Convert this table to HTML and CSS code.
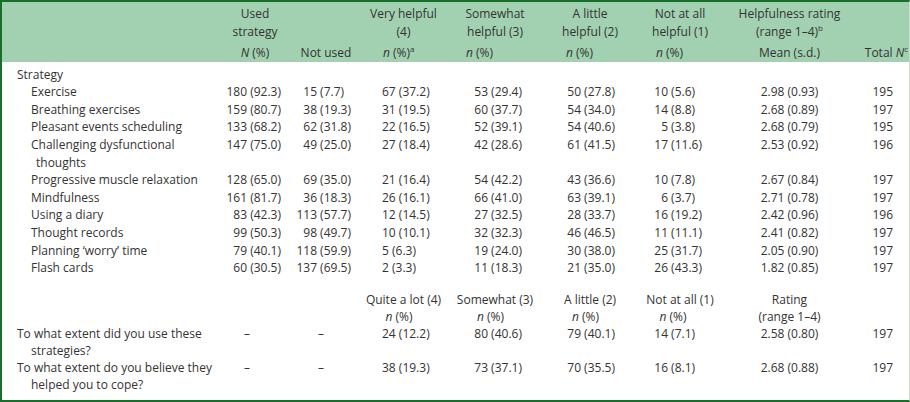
FILE: index.html
```html
<!DOCTYPE html>
<html lang="en">
<head>
<meta charset="utf-8">
<title>Strategy helpfulness</title>
<link rel="stylesheet" href="styles.css">
</head>
<body>
<div class="frame">
<table class="tbl">
<colgroup>
<col class="w0"><col class="w1"><col class="w2"><col class="w3"><col class="w4"><col class="w5"><col class="w6"><col class="w7"><col class="w8">
</colgroup>
<thead>
<tr class="h1">
<th></th>
<th class="ctr">Used<br>strategy</th>
<th></th>
<th class="ctr">Very helpful<br>(4)</th>
<th class="ctr">Somewhat<br>helpful (3)</th>
<th class="ctr">A little<br>helpful (2)</th>
<th class="ctr">Not at all<br>helpful (1)</th>
<th class="ctr rate">Helpfulness rating<br>(range 1–4)<sup>b</sup></th>
<th></th>
</tr>
<tr class="h2">
<th></th>
<th class="ctr"><i>N</i> (%)</th>
<th class="ctr">Not used</th>
<th class="num"><i>n</i> (%)<sup>a</sup></th>
<th class="num"><i>n</i> (%)</th>
<th class="num"><i>n</i> (%)</th>
<th class="num"><i>n</i> (%)</th>
<th class="ctr rate">Mean (s.d.)</th>
<th class="tot">Total <i>N</i><sup>c</sup></th>
</tr>
</thead>
<tbody>
<tr class="first"><td class="lbl top" colspan="9">Strategy</td></tr>
<tr><td class="lbl sub">Exercise</td><td class="u">180 (92.3)</td><td class="num"><span class="c">15</span> (7.7)</td><td class="num"><span class="c">67</span> (37.2)</td><td class="num"><span class="c">53</span> (29.4)</td><td class="num"><span class="c">50</span> (27.8)</td><td class="num"><span class="c">10</span> (5.6)</td><td class="ctr rate">2.98 (0.93)</td><td class="tot">195</td></tr>
<tr><td class="lbl sub">Breathing exercises</td><td class="u">159 (80.7)</td><td class="num"><span class="c">38</span> (19.3)</td><td class="num"><span class="c">31</span> (19.5)</td><td class="num"><span class="c">60</span> (37.7)</td><td class="num"><span class="c">54</span> (34.0)</td><td class="num"><span class="c">14</span> (8.8)</td><td class="ctr rate">2.68 (0.89)</td><td class="tot">197</td></tr>
<tr><td class="lbl sub">Pleasant events scheduling</td><td class="u">133 (68.2)</td><td class="num"><span class="c">62</span> (31.8)</td><td class="num"><span class="c">22</span> (16.5)</td><td class="num"><span class="c">52</span> (39.1)</td><td class="num"><span class="c">54</span> (40.6)</td><td class="num"><span class="c">5</span> (3.8)</td><td class="ctr rate">2.68 (0.79)</td><td class="tot">195</td></tr>
<tr><td class="lbl sub">Challenging dysfunctional<br><span class="hang">thoughts</span></td><td class="u">147 (75.0)</td><td class="num"><span class="c">49</span> (25.0)</td><td class="num"><span class="c">27</span> (18.4)</td><td class="num"><span class="c">42</span> (28.6)</td><td class="num"><span class="c">61</span> (41.5)</td><td class="num"><span class="c">17</span> (11.6)</td><td class="ctr rate">2.53 (0.92)</td><td class="tot">196</td></tr>
<tr><td class="lbl sub">Progressive muscle relaxation</td><td class="u">128 (65.0)</td><td class="num"><span class="c">69</span> (35.0)</td><td class="num"><span class="c">21</span> (16.4)</td><td class="num"><span class="c">54</span> (42.2)</td><td class="num"><span class="c">43</span> (36.6)</td><td class="num"><span class="c">10</span> (7.8)</td><td class="ctr rate">2.67 (0.84)</td><td class="tot">197</td></tr>
<tr><td class="lbl sub">Mindfulness</td><td class="u">161 (81.7)</td><td class="num"><span class="c">36</span> (18.3)</td><td class="num"><span class="c">26</span> (16.1)</td><td class="num"><span class="c">66</span> (41.0)</td><td class="num"><span class="c">63</span> (39.1)</td><td class="num"><span class="c">6</span> (3.7)</td><td class="ctr rate">2.71 (0.78)</td><td class="tot">197</td></tr>
<tr><td class="lbl sub">Using a diary</td><td class="u">83 (42.3)</td><td class="num"><span class="c">113</span> (57.7)</td><td class="num"><span class="c">12</span> (14.5)</td><td class="num"><span class="c">27</span> (32.5)</td><td class="num"><span class="c">28</span> (33.7)</td><td class="num"><span class="c">16</span> (19.2)</td><td class="ctr rate">2.42 (0.96)</td><td class="tot">196</td></tr>
<tr><td class="lbl sub">Thought records</td><td class="u">99 (50.3)</td><td class="num"><span class="c">98</span> (49.7)</td><td class="num"><span class="c">10</span> (10.1)</td><td class="num"><span class="c">32</span> (32.3)</td><td class="num"><span class="c">46</span> (46.5)</td><td class="num"><span class="c">11</span> (11.1)</td><td class="ctr rate">2.41 (0.82)</td><td class="tot">197</td></tr>
<tr><td class="lbl sub">Planning ‘worry’ time</td><td class="u">79 (40.1)</td><td class="num"><span class="c">118</span> (59.9)</td><td class="num"><span class="c">5</span> (6.3)</td><td class="num"><span class="c">19</span> (24.0)</td><td class="num"><span class="c">30</span> (38.0)</td><td class="num"><span class="c">25</span> (31.7)</td><td class="ctr rate">2.05 (0.90)</td><td class="tot">197</td></tr>
<tr><td class="lbl sub">Flash cards</td><td class="u">60 (30.5)</td><td class="num"><span class="c">137</span> (69.5)</td><td class="num"><span class="c">2</span> (3.3)</td><td class="num"><span class="c">11</span> (18.3)</td><td class="num"><span class="c">21</span> (35.0)</td><td class="num"><span class="c">26</span> (43.3)</td><td class="ctr rate">1.82 (0.85)</td><td class="tot">197</td></tr>
<tr class="q sub-head">
<td></td><td></td><td></td>
<td class="ctr">Quite a lot (4)<br><span class="np"><i>n</i> (%)</span></td>
<td class="ctr">Somewhat (3)<br><span class="np"><i>n</i> (%)</span></td>
<td class="ctr">A little (2)<br><span class="np"><i>n</i> (%)</span></td>
<td class="ctr">Not at all (1)<br><span class="np np6"><i>n</i> (%)</span></td>
<td class="ctr rate">Rating<br>(range 1–4)</td>
<td></td>
</tr>
<tr class="q"><td class="lbl top">To what extent did you use these<br><span class="hang2">strategies?</span></td><td class="dash">–</td><td class="dash2">–</td><td class="num"><span class="c">24</span> (12.2)</td><td class="num"><span class="c">80</span> (40.6)</td><td class="num"><span class="c">79</span> (40.1)</td><td class="num"><span class="c">14</span> (7.1)</td><td class="ctr rate">2.58 (0.80)</td><td class="tot">197</td></tr>
<tr class="q"><td class="lbl top">To what extent do you believe they<br><span class="hang2">helped you to cope?</span></td><td class="dash">–</td><td class="dash2">–</td><td class="num"><span class="c">38</span> (19.3)</td><td class="num"><span class="c">73</span> (37.1)</td><td class="num"><span class="c">70</span> (35.5)</td><td class="num"><span class="c">16</span> (8.1)</td><td class="ctr rate">2.68 (0.88)</td><td class="tot">197</td></tr>
</tbody>
</table>
</div>
</body>
</html>
```
FILE: styles.css
```css
html, body {
  margin: 0;
  padding: 0;
  background: #ffffff;
}
.frame {
  width: 910px;
  height: 402px;
  box-sizing: border-box;
  border-top: 2px solid #16702a;
  border-left: 2px solid #16702a;
  border-bottom: 2px solid #16702a;
  border-right: 1px solid #c9dccf;
  overflow: hidden;
}
.tbl {
  border-collapse: collapse;
  table-layout: fixed;
  width: 907px;
  font-family: "Open Sans", "DejaVu Sans", sans-serif;
  font-weight: 400;
  font-size: 12px;
  line-height: 17.6px;
  color: #333333;
}
.w0 { width: 218px; }
.w1 { width: 70px; }
.w2 { width: 72px; }
.w3 { width: 83px; }
.w4 { width: 100px; }
.w5 { width: 90px; }
.w6 { width: 90px; }
.w7 { width: 135px; }
.w8 { width: 49px; }
th, td {
  padding: 0;
  font-weight: 400;
  white-space: nowrap;
  vertical-align: top;
}
thead { background: #a2d1b1; }
.h1 th { padding-top: 3px; line-height: 17.5px; }
.h2 th { padding-top: 4px; padding-bottom: 0; }
sup { font-size: 8px; line-height: 0; vertical-align: 5px; }
.ctr { text-align: center; }
.rate { padding-right: 6px; }
.num { text-align: left; }
.h2 .num { padding-left: 21px; }
.tot { text-align: right; padding-right: 16px; }
.h2 .tot { padding-right: 1px; }
.u { text-align: right; padding-right: 9px; }
.c { display: inline-block; text-align: right; }
td:nth-child(3) .c { width: 27px; }
td:nth-child(4) .c { width: auto; margin-left: 20px; }
td:nth-child(5) .c { width: 14px; margin-left: 29px; }
td:nth-child(6) .c { width: 14px; margin-left: 22px; }
td:nth-child(7) .c { width: 14px; margin-left: 19px; }
.first td { padding-top: 4px; }
.lbl.top { padding-left: 15px; }
.lbl.sub { padding-left: 29px; }
.hang { padding-left: 5px; }
.hang2 { padding-left: 14px; }
.q td { line-height: 17px; }
.sub-head td { padding-top: 14px; }
.np { display: inline-block; margin-right: 9px; }
.np6 { margin-right: 14px; }
.dash { padding-left: 24px; }
.dash2 { padding-left: 28px; }
```
